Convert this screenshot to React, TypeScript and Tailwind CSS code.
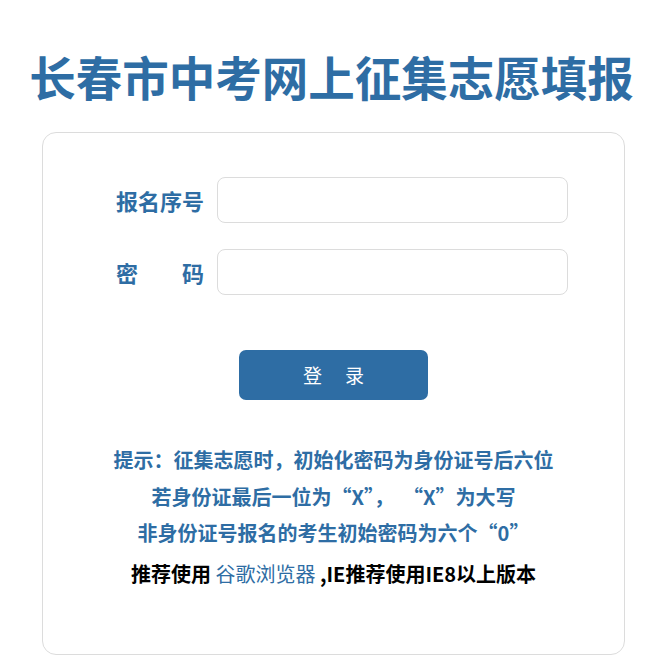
import React from 'react';

const cjk = { fontFamily: '"Noto Sans CJK SC", "Noto Sans", sans-serif' };

function Field({ label, type }: { label: React.ReactNode; type: string }) {
  return (
    <div className="flex items-center">
      <div className="ml-[73px] w-[88px] text-[22px] font-bold text-[#2e6da4] leading-none">{label}</div>
      <input
        type={type}
        className="ml-[13px] w-[351px] h-[46px] rounded-[8px] border border-[#dcdcdc] bg-white px-3 outline-none"
      />
    </div>
  );
}

export default function App() {
  return (
    <div className="min-h-[659px] bg-white" style={cjk}>
      <h1 className="pt-[46px] ml-[28px] w-[607px] text-center text-[46.5px] leading-[60px] font-bold text-[#2e6da4] whitespace-nowrap">
        长春市中考网上征集志愿填报
      </h1>

      <div className="mt-[26px] ml-[42px] w-[583px] h-[523px] rounded-[14px] border border-[#dcdcdc] bg-white">
        <div className="pt-[44px] flex flex-col gap-[26px]">
          <Field label="报名序号" type="text" />
          <Field
            label={
              <span className="flex justify-between">
                <span>密</span>
                <span>码</span>
              </span>
            }
            type="password"
          />
        </div>

        <div className="mt-[55px] flex justify-center">
          <button className="w-[189px] h-[50px] rounded-[7px] bg-[#2e6da4] text-white text-[19px] tracking-[23px] pl-[23px]">
            登录
          </button>
        </div>

        <div className="mt-[42px] text-center text-[20px] font-bold text-[#2e6da4] leading-[36.5px]">
          <p>提示：征集志愿时，初始化密码为身份证号后六位</p>
          <p>若身份证最后一位为“X”，&nbsp;&nbsp;“X”为大写</p>
          <p>非身份证号报名的考生初始密码为六个“0”</p>
          <p className="mt-[4px] text-black">
            推荐使用 <span className="font-normal text-[#2e6da4]">谷歌浏览器</span> ,IE推荐使用IE8以上版本
          </p>
        </div>
      </div>
    </div>
  );
}
